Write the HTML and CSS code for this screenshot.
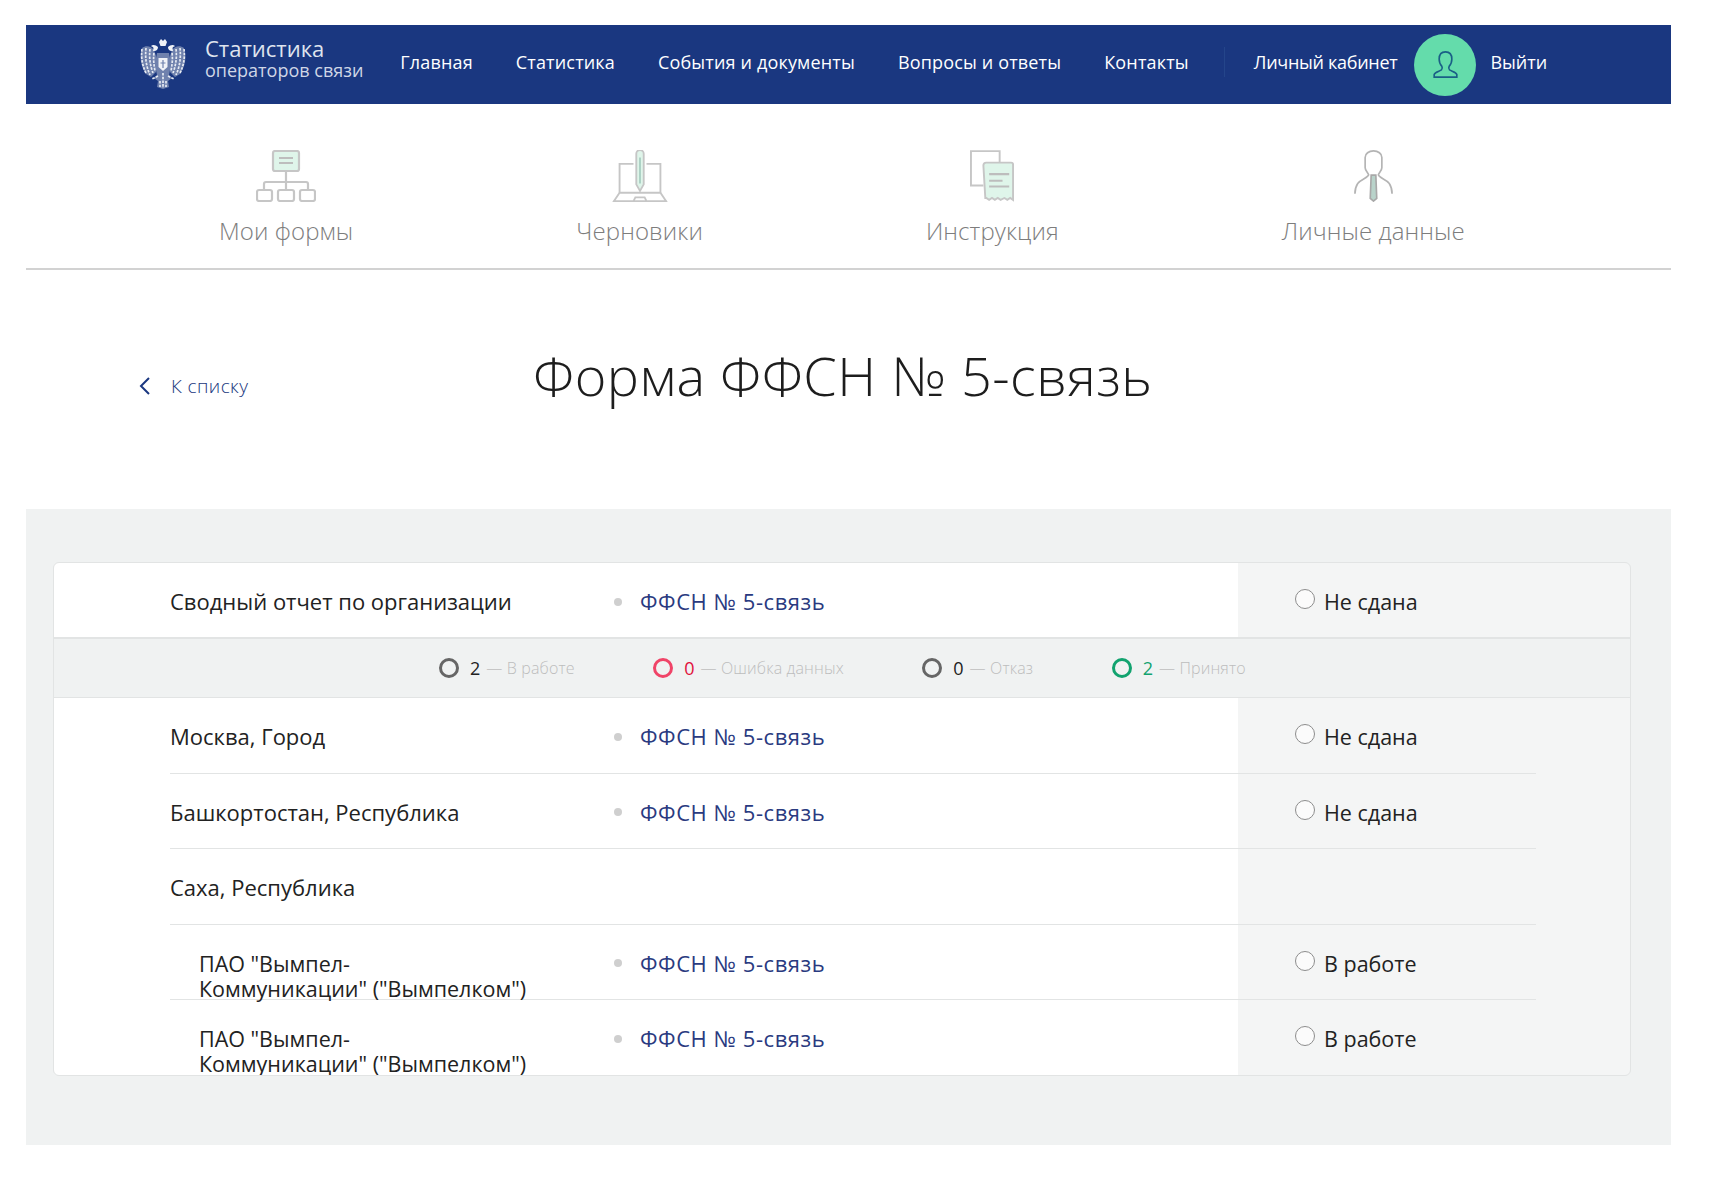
FILE: index.html
```html
<!DOCTYPE html>
<html lang="ru">
<head>
<meta charset="utf-8">
<title>Форма ФФСН № 5-связь</title>
<link rel="stylesheet" href="styles.css">
</head>
<body>
<div class="page">
  <header class="topbar">
    <a class="brand">
      <svg class="emblem" viewBox="0 0 48 50" width="48" height="50">
        <g fill="#6f81ad">
          <path d="M3 9c4-3 9-2 12 2l3 9-1 13-5 5-5-3C2 28 0 18 3 9z"/>
          <path d="M45 9c-4-3-9-2-12 2l-3 9 1 13 5 5 5-3c5-7 7-17 4-24z"/>
          <path d="M18 14h12l2 12-2 10 3 3-4 3 1 6-6 2-6-2 1-6-4-3 3-3-2-10z"/>
        </g>
        <g fill="none" stroke="#e6eaf2" stroke-width="1.700" stroke-dasharray="2.600 1.100">
          <path d="M3 10c-1 8 0 16 4 24M7 9c-1 9 0 18 4 27M11 10c-1 8 0 16 3 24M15 14c-1 6 0 12 1 18"/>
          <path d="M45 10c1 8 0 16-4 24M41 9c1 9 0 18-4 27M37 10c1 8 0 16-3 24M33 14c1 6 0 12-1 18"/>
          <path d="M19 37l-6 3M29 37l6 3M21 42v6M27 42v6M24 34v15"/>
        </g>
        <g fill="#f0f2f7">
          <path d="M20 3l2-3 2 2 2-2 2 3-1.500 4h-5z"/>
          <path d="M19 8c-2-2-5-3-7-1 1 .5 2 1 2.500 2l-.5 3c3 .5 5-1 5-4z"/>
          <path d="M29 8c2-2 5-3 7-1-1 .5-2 1-2.500 2l.5 3c-3 .5-5-1-5-4z"/>
          <path d="M19.500 19h9v9l-4.500 4-4.500-4z"/>
        </g>
        <path d="M24 21v8M21.500 24h5" stroke="#6f81ad" stroke-width="1.200" fill="none"/>
      </svg>
      <span class="brand-text">
        <span class="brand-title">Статистика</span>
        <span class="brand-sub">операторов связи</span>
      </span>
    </a>
    <nav class="mainnav">
      <a>Главная</a>
      <a>Статистика</a>
      <a>События и документы</a>
      <a>Вопросы и ответы</a>
      <a>Контакты</a>
    </nav>
    <div class="account">
      <a class="account-link">Личный кабинет</a>
      <span class="avatar">
        <svg viewBox="0 0 32 32" width="29" height="29" fill="none" stroke="#1a5f86" stroke-width="1.800">
          <path d="M16 2c-5 0-7 3.500-7 8 0 3 1 6 3 8 .5 1 .5 3-.500 4-2 1.500-7 2-8 5v3h25v-3c-1-3-6-3.500-8-5-1-1-1-3-.500-4 2-2 3-5 3-8 0-4.500-2-8-7-8z"/>
        </svg>
      </span>
      <a>Выйти</a>
    </div>
  </header>

  <nav class="subnav">
    <a class="subnav-item">
      <svg viewBox="0 0 60 52" width="60" height="52" fill="none" stroke="#c6c6c6" stroke-width="2.200">
        <rect x="17" y="1" width="26" height="20" rx="2" fill="#dff5ea"/>
        <path d="M23 8h14M23 13h14" stroke="#bdbdbd"/>
        <path d="M30 21v19M8 40v-6a2 2 0 0 1 2-2h40a2 2 0 0 1 2 2v6"/>
        <rect x="1" y="40" width="15" height="11" rx="2"/>
        <rect x="22" y="40" width="16" height="11" rx="2"/>
        <rect x="44" y="40" width="15" height="11" rx="2"/>
      </svg>
      <span>Мои формы</span>
    </a>
    <a class="subnav-item">
      <svg viewBox="0 0 58 56" width="58" height="52" fill="none" stroke="#c6c6c6" stroke-width="2">
        <path d="M22 15H7v31M36 15h15v31"/>
        <path d="M7 46L1 55h56l-6-9zM0 55h58M22 55l2-4h10l2 4"/>
        <path d="M25 4a4 4 0 0 1 8 0v33l-4 7-4-7z" fill="#dff5ea"/>
        <path d="M29 8v28" stroke="#a9cfc2"/>
      </svg>
      <span>Черновики</span>
    </a>
    <a class="subnav-item">
      <svg viewBox="0 0 46 54" width="44" height="52" fill="none" stroke="#c6c6c6" stroke-width="2">
        <path d="M14 37H1V1h30v12"/>
        <path d="M14 16a3 3 0 0 1 3-3h26a2 2 0 0 1 2 2v37l-3-2-3 2-3-2-4 2-3-2-3 2-3-2-3 2-3-2-1 0z" fill="#dff5ea"/>
        <path d="M20 25h21M20 32h14M20 38h21" stroke="#bdbdbd" stroke-width="2.200"/>
      </svg>
      <span>Инструкция</span>
    </a>
    <a class="subnav-item">
      <svg viewBox="0 0 42 56" width="39" height="52" fill="none" stroke="#b4b4b4" stroke-width="1.800">
        <path d="M16 27c-1-3-4-5-4-8V8c0-4 4-7 9-7s9 3 9 7v11c0 3-3 5-4 8"/>
        <path d="M16 27c-3 4-9 5-12 9-2 3-3 6-3 11M26 27c3 4 9 5 12 9 2 3 3 6 3 11"/>
        <path d="M18.500 27h5l1 25-3.500 3-3.500-3z" fill="#b8d3ca" stroke="#a8a8a8"/>
      </svg>
      <span>Личные данные</span>
    </a>
  </nav>

  <div class="titlebar">
    <a class="backlink">
      <svg viewBox="0 0 12 18" width="12" height="18" fill="none" stroke="#1a3780" stroke-width="2"><path d="M10 1L2 9l8 8"/></svg>
      <span>К списку</span>
    </a>
    <h1>Форма ФФСН № 5-связь</h1>
  </div>

  <section class="panel">
    <div class="card">
      <div class="row row-summary">
        <div class="name">Сводный отчет по организации</div>
        <div class="form"><i class="dot"></i><a>ФФСН № 5-связь</a></div>
        <div class="status"><i class="ring"></i>Не сдана</div>
      </div>
      <div class="stats">
        <div class="stat stat-dark"><i class="mark"></i><b>2</b><span>— В работе</span></div>
        <div class="stat stat-red"><i class="mark"></i><b>0</b><span>— Ошибка данных</span></div>
        <div class="stat stat-dark"><i class="mark"></i><b>0</b><span>— Отказ</span></div>
        <div class="stat stat-green"><i class="mark"></i><b>2</b><span>— Принято</span></div>
      </div>
      <div class="row">
        <div class="name">Москва, Город</div>
        <div class="form"><i class="dot"></i><a>ФФСН № 5-связь</a></div>
        <div class="status"><i class="ring"></i>Не сдана</div>
      </div>
      <div class="row">
        <div class="name">Башкортостан, Республика</div>
        <div class="form"><i class="dot"></i><a>ФФСН № 5-связь</a></div>
        <div class="status"><i class="ring"></i>Не сдана</div>
      </div>
      <div class="row">
        <div class="name">Саха, Республика</div>
      </div>
      <div class="row">
        <div class="name name-sub">ПАО "Вымпел-<br>Коммуникации" ("Вымпелком")</div>
        <div class="form"><i class="dot"></i><a>ФФСН № 5-связь</a></div>
        <div class="status"><i class="ring"></i>В работе</div>
      </div>
      <div class="row row-last">
        <div class="name name-sub">ПАО "Вымпел-<br>Коммуникации" ("Вымпелком")</div>
        <div class="form"><i class="dot"></i><a>ФФСН № 5-связь</a></div>
        <div class="status"><i class="ring"></i>В работе</div>
      </div>
    </div>
  </section>
</div>
</body>
</html>
```
FILE: styles.css
```css
* { box-sizing: border-box; }
html, body { margin: 0; background: #fff; }
body { font-family: "Open Sans", "Noto Sans", sans-serif; color: #222; }
.page { margin: 25px 44px 34px 26px; }
a { color: inherit; text-decoration: none; }

.topbar {
  display: flex; align-items: center; height: 79px; padding-left: 113px;
  background: #1a3780; color: #fff; font-size: 18px;
}
.brand { display: flex; align-items: center; gap: 18px; margin-right: 37px; }
.emblem { display: block; margin-top: -2px; }
.brand-text { display: flex; flex-direction: column; margin-top: -14px; }
.brand-title { font-size: 22px; font-weight: 500; line-height: 24px; color: #dfe4ee; }
.brand-sub { font-size: 18px; line-height: 20px; color: #cfd6e6; }
.mainnav { display: flex; gap: 43px; margin-top: -6px; line-height: 24px; letter-spacing: .16px; }
.account {
  display: flex; align-items: center; height: 30px; margin-left: 35px; margin-top: -6px;
  padding-left: 29px; border-left: 1px solid #24458a;
}
.account-link { letter-spacing: -.3px; }
.avatar {
  display: flex; align-items: center; justify-content: center; flex: none;
  width: 62px; height: 62px; margin: 6px 14px 0 17px; border-radius: 50%; background: #64dcab;
}

.subnav {
  display: flex; gap: 223px; height: 166px; padding: 46px 0 0 193px;
  border-bottom: 2px solid #d2d2d2; color: #7d7d7d; font-size: 24px; font-weight: 300;
}
.subnav-item { display: flex; flex-direction: column; align-items: center; white-space: nowrap; letter-spacing: .1px; }
.subnav-item svg { display: block; }
.subnav-item span { margin-top: 12px; line-height: 33px; }

.titlebar {
  display: flex; align-items: flex-start; height: 239px; padding: 71px 0 0 113px;
}
.backlink {
  display: flex; align-items: center; gap: 20px; width: 394px; margin-top: 33px;
  color: #1a3780; font-size: 19px; font-weight: 300; line-height: 24px; letter-spacing: .4px;
}
.backlink svg { display: block; }
h1 { margin: 0; font-size: 54px; font-weight: 300; line-height: 68px; letter-spacing: .5px; color: #1d1d1d; white-space: nowrap; }

.panel { height: 636px; padding: 53px 40px 0 27px; background: #f0f2f2; }
.card {
  height: 514px; overflow: hidden; border: 1px solid #e2e4e4; border-radius: 6px;
  background: linear-gradient(to right, #fff 1184px, #f4f5f5 1184px);
}
.row {
  display: grid; grid-template-columns: 470px 597px 1fr; height: 75.5px; margin: 0 94px 0 116px;
  padding-top: 26px; border-bottom: 1px solid #e2e4e4; font-size: 22px; line-height: 25px;
}
.row-summary { height: 76px; margin: 0; padding-left: 116px; padding-right: 94px; border-bottom: 2px solid #e2e4e4; }
.row-last { border-bottom: 0; }
.name-sub { padding-left: 29px; font-size: 21.500px; white-space: nowrap; }
.form { display: flex; align-items: center; height: 25px; color: #2a3a80; letter-spacing: .55px; }
.dot { width: 8px; height: 8px; margin: 0 18px 0 -26px; border-radius: 50%; background: #cfcfcf; }
.status { display: flex; align-items: flex-start; padding-left: 58px; font-size: 21.500px; }
.ring {
  width: 20px; height: 20px; margin: 0 9px 0 0; border: 1px solid #8d8d8d; border-radius: 50%; background: #fbfbfb;
}
.stats {
  display: flex; gap: 78.500px; height: 59px; align-items: center; padding-left: 385px;
  border-bottom: 1px solid #e2e4e4; background: #f0f2f2; font-size: 18px;
}
.stat { display: flex; align-items: center; white-space: nowrap; }
.mark { width: 20px; height: 20px; margin-right: 11px; border: 3px solid #666; border-radius: 50%; }
.stat b { font-weight: 400; margin-right: 6px; }
.stat span { color: #bdbdbd; font-size: 16px; font-weight: 300; letter-spacing: .15px; }
.stat-red .mark { border-color: #f04468; }
.stat-red b { color: #e0103c; }
.stat-green .mark { border-color: #12a36f; }
.stat-green b { color: #12a36f; }
```
